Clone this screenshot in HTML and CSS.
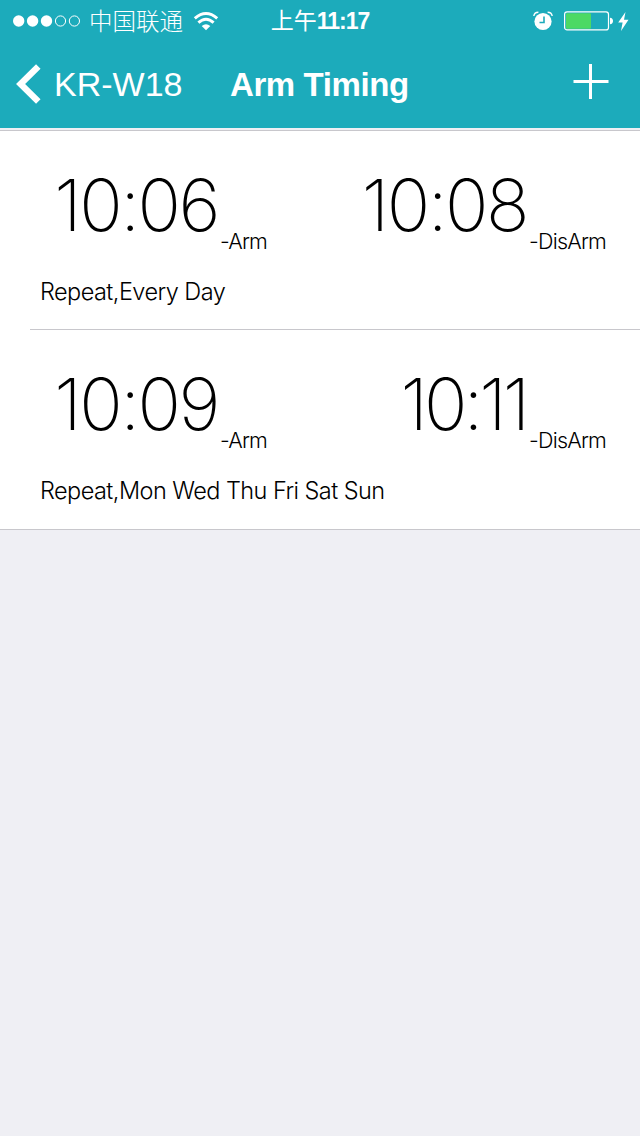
FILE: index.html
```html
<!DOCTYPE html>
<html lang="en">
  <head>
    <meta charset="UTF-8" />
    <meta name="viewport" content="width=device-width, initial-scale=1.0" />
    <title>Arm Timing</title>
    <link rel="stylesheet" href="styles.css">
  </head>
  <body>
    <header class="header">
      <div class="status">
        <div class="statusLeft">
          <svg class="signal" width="68" height="12" viewBox="0 0 68 12">
            <g fill="#fff">
              <circle cx="5.7" cy="6" r="5.7" />
              <circle cx="19.6" cy="6" r="5.7" />
              <circle cx="33.5" cy="6" r="5.7" />
            </g>
            <g fill="none" stroke="#fff">
              <circle cx="47.5" cy="6" r="5.1" />
              <circle cx="61.4" cy="6" r="5.1" />
            </g>
          </svg>
          <span class="carrier">中国联通</span>
          <svg class="wifi" width="26" height="20" viewBox="0 0 26 20">
            <g fill="none" stroke="#fff" stroke-width="3">
              <path d="M1.8 7.3Q13-2.3 24.2 7.3" />
              <path d="M5.4 11.6Q13 4.9 20.6 11.6" />
            </g>
            <path d="M8.7 15Q13 11.3 17.3 15L13 19.2z" fill="#fff" />
          </svg>
        </div>
        <div class="clock"><span class="ampm">上午</span>11:17</div>
        <div class="statusRight">
          <svg class="alarm" width="20" height="20" viewBox="0 0 20 20">
            <circle cx="10" cy="10.5" r="8.6" fill="#fff" />
            <path d="M.8 5Q1.4 1.3 5.4 1.3M19.2 5Q18.6 1.3 14.6 1.3" fill="none" stroke="#fff" stroke-width="1.4" />
            <path d="M11 5.5v6H6.5" fill="none" stroke="#1cabbb" stroke-width="1.6" />
          </svg>
          <svg class="battery" width="50" height="20" viewBox="0 0 50 20">
            <rect x=".6" y=".9" width="43.9" height="18" rx="2.5" fill="none" stroke="#fff" stroke-width="1.2" />
            <rect x="2" y="2.3" width="25" height="15.4" rx="1" fill="#4cd964" />
            <path d="M46 6.7q3 .3 3 3.3t-3 3.3z" fill="#fff" />
          </svg>
          <svg class="bolt" width="11" height="19" viewBox="0 0 11 19">
            <path d="M7.5 0L.2 10.5h4.4L3 19 10.5 7.8H6z" fill="#fff" />
          </svg>
        </div>
      </div>
      <nav class="nav">
        <a class="back">
          <svg width="25" height="40" viewBox="0 0 25 40">
            <path d="M22.3 2.5L4.6 20l17.7 17.5" fill="none" stroke="#fff" stroke-width="6.4" />
          </svg>
          <span class="backText">KR-W18</span>
        </a>
        <h1 class="title">Arm Timing</h1>
        <svg class="add" width="36" height="36" viewBox="0 0 36 36">
          <path d="M.5 17.5h35M17.5 0v35" stroke="#fff" stroke-width="3" />
        </svg>
      </nav>
    </header>

    <ul class="list">
      <li class="item">
        <div class="times">
          <div class="arm"><span class="time">10:06</span><span class="label">-Arm</span></div>
          <div class="disarm"><span class="time">10:08</span><span class="label">-DisArm</span></div>
        </div>
        <p class="repeat">Repeat,Every Day</p>
      </li>
      <li class="item">
        <div class="times">
          <div class="arm"><span class="time">10:09</span><span class="label">-Arm</span></div>
          <div class="disarm"><span class="time narrow">10:11</span><span class="label">-DisArm</span></div>
        </div>
        <p class="repeat">Repeat,Mon Wed Thu Fri Sat Sun</p>
      </li>
    </ul>
  </body>
</html>
```
FILE: styles.css
```css
* {
  box-sizing: border-box;
}
body {
  margin: 0;
  min-height: 1136px;
  background: #efeff4;
  color: #000;
  font-family: Inter, "Liberation Sans", "Noto Sans CJK SC", sans-serif;
}
svg {
  display: block;
  flex: none;
}
.header {
  height: 128px;
  background: #1cabbb;
  color: #fff;
  font-family: "Liberation Sans", "Noto Sans CJK SC", sans-serif;
}
.status {
  display: grid;
  grid-template-columns: 1fr auto 1fr;
  align-items: center;
  height: 40px;
  padding: 2px 11px 0 13px;
}
.statusLeft,
.statusRight {
  display: flex;
  align-items: center;
}
.statusRight {
  justify-content: flex-end;
}
.carrier {
  margin: -2px 10px 0 8px;
  font: 300 23.5px/36px "Noto Sans CJK SC", sans-serif;
}
.clock {
  margin: -2px 2px 0 0;
  font-size: 23px;
  font-weight: 700;
  line-height: 36px;
  letter-spacing: -1px;
  white-space: nowrap;
}
.ampm {
  font-family: "Noto Sans CJK SC", sans-serif;
  font-weight: 400;
  letter-spacing: 0;
}
.alarm {
  margin-right: 11px;
}
.bolt {
  margin-left: 4px;
}
.nav {
  display: flex;
  align-items: center;
  height: 88px;
  padding: 0 31px 0 16px;
}
.back {
  display: flex;
  align-items: center;
  width: 214px;
}
.backText {
  margin-left: 13px;
  font-size: 34px;
}
.title {
  margin: 0;
  padding-top: 2px;
  font-size: 33px;
  font-weight: 700;
  letter-spacing: -0.4px;
}
.add {
  margin: -4px 0 0 auto;
}
.list {
  margin: 2px 0 0;
  padding: 0;
  list-style: none;
  background: #fff;
  border-top: 1px solid #c8c7cc;
  border-bottom: 1px solid #c8c7cc;
}
.item {
  height: 198px;
  padding: 44px 34px 0 40px;
}
.item + .item {
  height: 200px;
  margin-left: 30px;
  padding-left: 10px;
  border-top: 1px solid #c8c7cc;
}
.times {
  display: flex;
  justify-content: space-between;
  height: 88px;
}
.arm,
.disarm {
  display: flex;
  align-items: flex-start;
}
.time {
  width: 180px;
  padding-right: 2px;
  text-align: right;
  font-size: 72px;
  font-weight: 200;
  line-height: 60px;
  letter-spacing: -2.5px;
}
.narrow {
  padding-right: 3px;
  letter-spacing: -4px;
}
.label {
  margin-top: 51px;
  font-size: 21.5px;
  font-weight: 300;
  line-height: 30px;
  letter-spacing: -0.8px;
}
.repeat {
  margin: 14px 0 0;
  font-size: 23.5px;
  font-weight: 300;
  line-height: 30px;
  letter-spacing: -0.55px;
}
```
